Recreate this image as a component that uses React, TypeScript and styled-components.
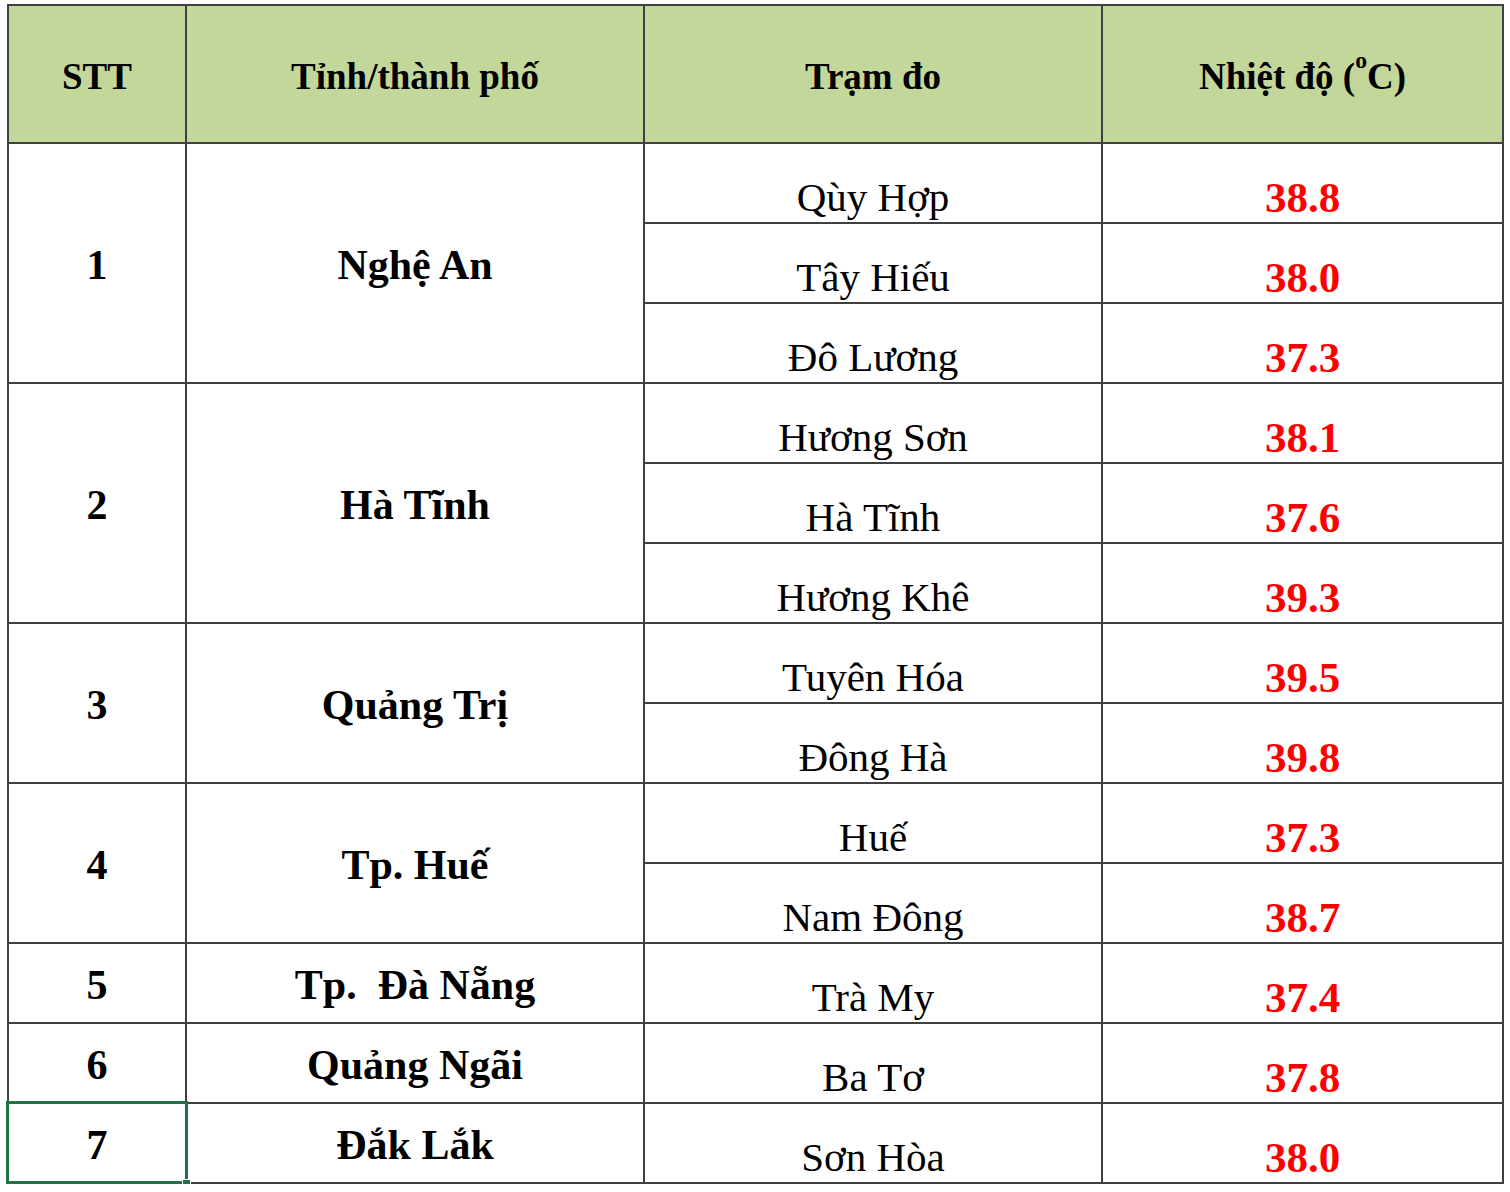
import React from "react";
import styled, { createGlobalStyle } from "styled-components";

const serif = `"Liberation Serif", "Times New Roman", serif`;

const Global = createGlobalStyle`
  html, body { margin: 0; padding: 0; background: #ffffff; }
  body { padding: 4px 0 0 7px; color: #000; font-family: ${serif}; }
`;

const Grid = styled.div`
  display: grid;
  grid-template-columns: 176px 456px 456px 399px;
  grid-template-rows: 136px repeat(13, 78px);
  gap: 2px;
  padding: 2px;
  width: max-content;
  background: #404040;
  font-family: ${serif};
`;

const HeadCell = styled.div`
  background: #c4d79b;
  display: flex;
  align-items: center;
  justify-content: center;
  padding-top: 6px;
  font-family: ${serif};
  font-weight: bold;
  font-size: 37px;
  line-height: 1.15;
  white-space: nowrap;
`;

const Sup = styled.span`
  font-size: 0.64em;
  position: relative;
  top: -0.7em;
`;

const GroupCell = styled.div<{ $start: number; $span: number; $col: number; $selected?: boolean }>`
  grid-column: ${(p) => p.$col};
  grid-row: ${(p) => p.$start} / span ${(p) => p.$span};
  background: #fff;
  display: flex;
  align-items: center;
  justify-content: center;
  padding-top: 3px;
  font-family: ${serif};
  font-weight: bold;
  font-size: 42px;
  white-space: pre;
  position: relative;
  ${(p) =>
    p.$selected
      ? `
    z-index: 2;
    &::before {
      content: "";
      position: absolute;
      left: -3px; top: -3px; right: -3px; bottom: -2px;
      border: 3px solid #217346;
      pointer-events: none;
    }
    &::after {
      content: "";
      position: absolute;
      right: -6px; bottom: -6px;
      width: 7px; height: 7px;
      background: #217346;
      border: 1px solid #fff;
    }
  `
      : ""}
`;

const StationCell = styled.div<{ $row: number }>`
  grid-column: 3;
  grid-row: ${(p) => p.$row};
  background: #fff;
  display: flex;
  align-items: flex-end;
  justify-content: center;
  padding-bottom: 1px;
  font-family: ${serif};
  font-size: 41px;
  white-space: nowrap;
`;

const TempCell = styled(StationCell)`
  grid-column: 4;
  color: #ff0000;
  font-weight: bold;
  font-size: 43px;
  padding-bottom: 0;
`;

type Group = { stt: string; name: string; stations: [string, string][] };

const groups: Group[] = [
  { stt: "1", name: "Nghệ An", stations: [["Qùy Hợp", "38.8"], ["Tây Hiếu", "38.0"], ["Đô Lương", "37.3"]] },
  { stt: "2", name: "Hà Tĩnh", stations: [["Hương Sơn", "38.1"], ["Hà Tĩnh", "37.6"], ["Hương Khê", "39.3"]] },
  { stt: "3", name: "Quảng Trị", stations: [["Tuyên Hóa", "39.5"], ["Đông Hà", "39.8"]] },
  { stt: "4", name: "Tp. Huế", stations: [["Huế", "37.3"], ["Nam Đông", "38.7"]] },
  { stt: "5", name: "Tp.  Đà Nẵng", stations: [["Trà My", "37.4"]] },
  { stt: "6", name: "Quảng Ngãi", stations: [["Ba Tơ", "37.8"]] },
  { stt: "7", name: "Đắk Lắk", stations: [["Sơn Hòa", "38.0"]] },
];

export default function App() {
  let row = 2;
  const cells: React.ReactNode[] = [];
  groups.forEach((g, gi) => {
    const start = row;
    const span = g.stations.length;
    cells.push(
      <GroupCell key={`s${gi}`} $col={1} $start={start} $span={span} $selected={g.stt === "7"}>
        {g.stt}
      </GroupCell>
    );
    cells.push(
      <GroupCell key={`n${gi}`} $col={2} $start={start} $span={span}>
        {g.name}
      </GroupCell>
    );
    g.stations.forEach(([st, t], si) => {
      cells.push(
        <StationCell key={`st${gi}-${si}`} $row={start + si}>
          {st}
        </StationCell>
      );
      cells.push(
        <TempCell key={`t${gi}-${si}`} $row={start + si}>
          {t}
        </TempCell>
      );
    });
    row += span;
  });

  return (
    <>
      <Global />
      <Grid>
        <HeadCell>STT</HeadCell>
        <HeadCell>Tỉnh/thành phố</HeadCell>
        <HeadCell>Trạm đo</HeadCell>
        <HeadCell>
          Nhiệt độ (<Sup>o</Sup>C)
        </HeadCell>
        {cells}
      </Grid>
    </>
  );
}
